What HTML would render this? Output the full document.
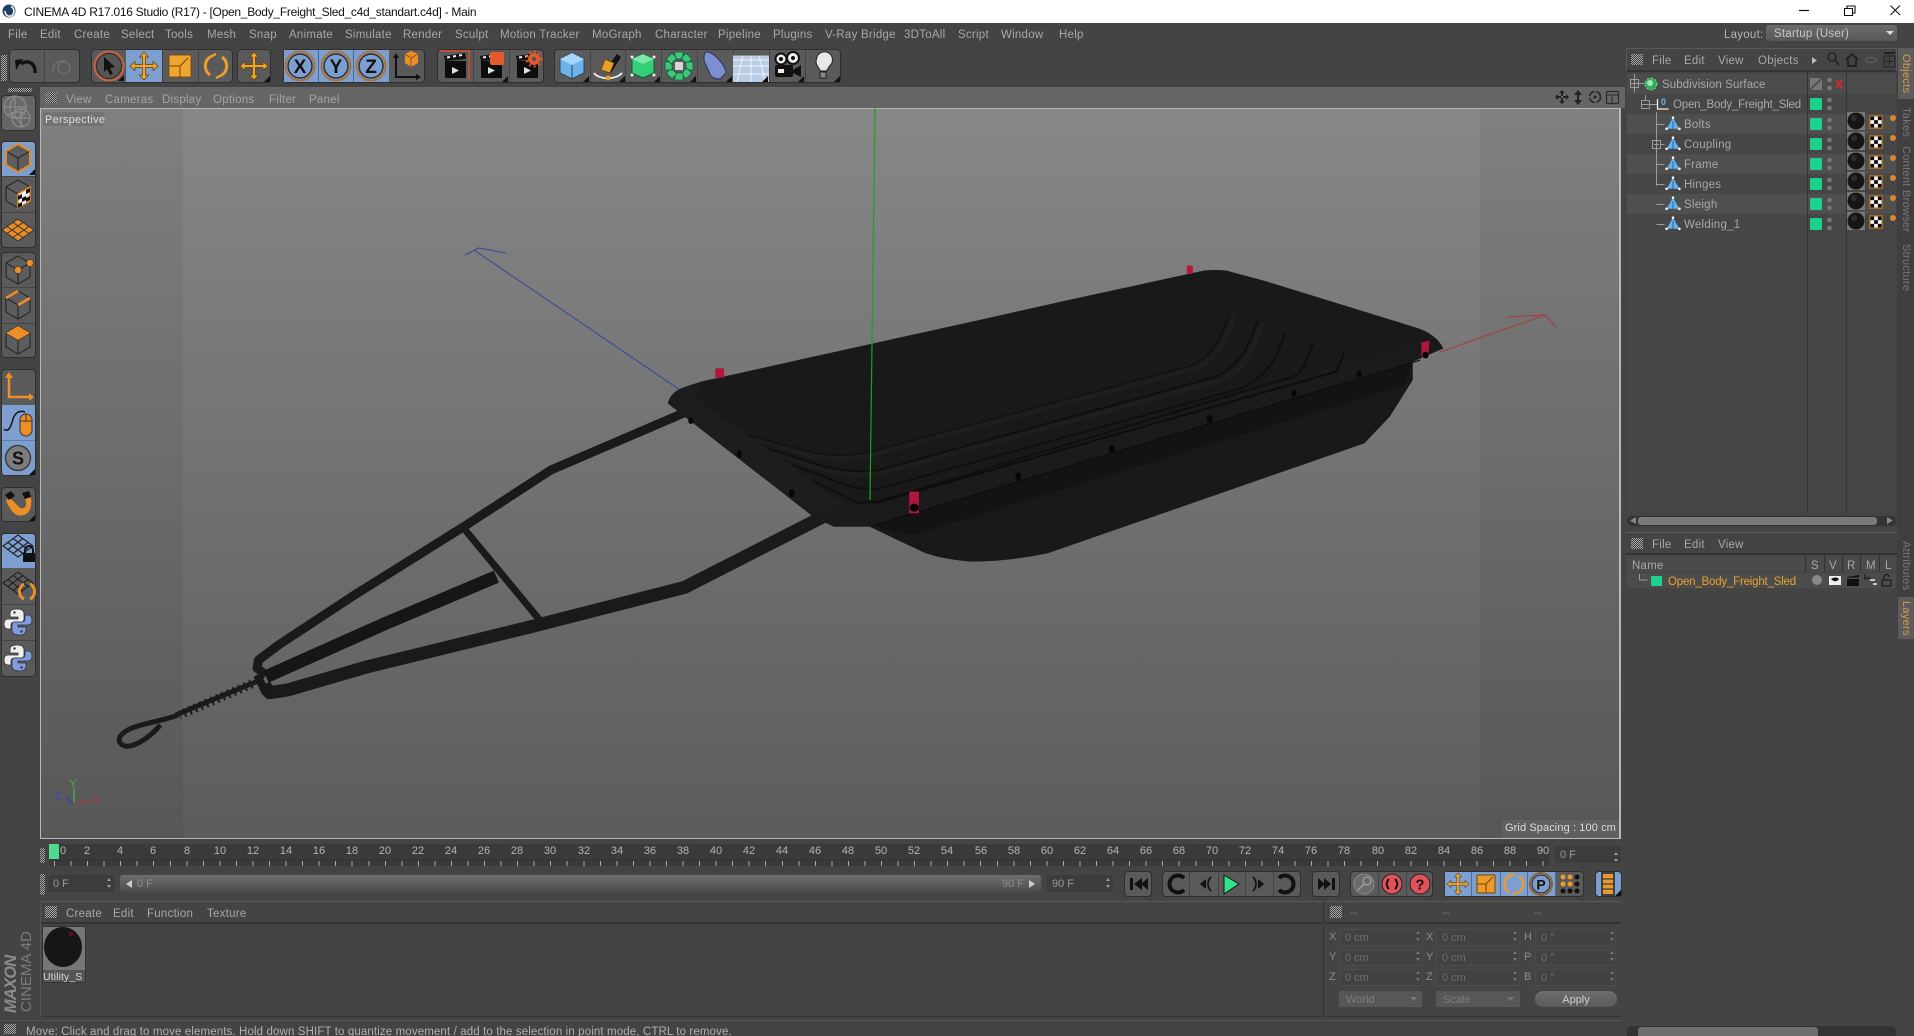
<!DOCTYPE html>
<html><head><meta charset="utf-8"><title>CINEMA 4D</title>
<style>
html,body{margin:0;padding:0;width:1914px;height:1036px;overflow:hidden;background:#444}
body{position:relative;z-index:0;font-family:"Liberation Sans",sans-serif;font-size:11.5px;color:#a8a8a8}
.a,.t{position:absolute}
.t{white-space:nowrap;line-height:14px;letter-spacing:.25px;margin-top:1px}
.n{letter-spacing:.1px}
.g{position:absolute;background:conic-gradient(#a8a8a8 25%,#3c3c3c 0 50%,#a8a8a8 0 75%,#3c3c3c 0) 0 0/2px 2px}
.b{position:absolute;background:#5a5a5a;border:1px solid #2f2f2f;border-radius:4px;box-sizing:border-box}
.bl{position:absolute;background:#7d9fd0}
.dv{position:absolute;width:1px;background:#444}
.f{position:absolute;background:#3c3c3c;border-radius:2px;box-sizing:border-box;color:#9a9a9a;padding-left:5px;line-height:19px;font-size:11px}
.c{position:absolute;background:#424242;border:1px solid #4b4b4b;border-radius:2px;box-sizing:border-box;color:#6e6e6e;padding-left:5px;height:17px;line-height:16px;font-size:11px}
.dim{color:#8c8c8c;font-size:11px;margin-top:0}
.rl{position:absolute;top:844px;width:24px;text-align:center;color:#b5b5b5;font-size:11px;line-height:14px}
.tab{position:absolute;left:1898px;width:16px;writing-mode:vertical-rl;font-size:11px;color:#777;box-sizing:border-box;text-align:center;line-height:17px;white-space:nowrap;letter-spacing:.3px}
</style></head><body>

<!-- title bar -->
<div class="a" style="left:0;top:0;width:1914px;height:23px;background:#fff"></div>
<div class="t" style="left:24px;top:5px;color:#111;font-size:12px;letter-spacing:-.28px;margin-top:0">CINEMA 4D R17.016 Studio (R17) - [Open_Body_Freight_Sled_c4d_standart.c4d] - Main</div>

<!-- main menu -->
<div class="t" style="left:8px;top:27px">File</div><div class="t" style="left:40px;top:27px">Edit</div><div class="t" style="left:74px;top:27px">Create</div><div class="t" style="left:121px;top:27px">Select</div><div class="t" style="left:165px;top:27px">Tools</div><div class="t" style="left:207px;top:27px">Mesh</div><div class="t" style="left:249px;top:27px">Snap</div><div class="t" style="left:289px;top:27px">Animate</div><div class="t" style="left:345px;top:27px">Simulate</div><div class="t" style="left:403px;top:27px">Render</div><div class="t" style="left:455px;top:27px">Sculpt</div><div class="t" style="left:500px;top:27px">Motion Tracker</div><div class="t" style="left:592px;top:27px">MoGraph</div><div class="t" style="left:655px;top:27px">Character</div><div class="t" style="left:718px;top:27px">Pipeline</div><div class="t" style="left:773px;top:27px">Plugins</div><div class="t" style="left:825px;top:27px">V-Ray Bridge</div><div class="t" style="left:904px;top:27px">3DToAll</div><div class="t" style="left:958px;top:27px">Script</div><div class="t" style="left:1001px;top:27px">Window</div><div class="t" style="left:1059px;top:27px">Help</div>
<div class="t" style="left:1724px;top:27px;color:#b5b5b5">Layout:</div>
<div class="a" style="left:1766px;top:25px;width:131px;height:16px;background:linear-gradient(#6c6c6c,#585858);border-radius:3px;color:#c8c8c8;line-height:18px;padding-left:8px;box-sizing:border-box;letter-spacing:.2px">Startup (User)</div>

<!-- top toolbar bases -->
<div class="g" style="left:1px;top:55px;width:6px;height:26px"></div>
<div class="b" style="left:9px;top:49px;width:71px;height:34px"></div>
<div class="b" style="left:91px;top:49px;width:142px;height:34px"></div>
<div class="bl" style="left:126px;top:50px;width:36px;height:32px"></div>
<div class="b" style="left:237px;top:49px;width:34px;height:34px"></div>
<div class="b" style="left:283px;top:49px;width:142px;height:34px"></div>
<div class="bl" style="left:284px;top:50px;width:105px;height:32px"></div>
<div class="b" style="left:437px;top:49px;width:107px;height:34px"></div>
<div class="b" style="left:554px;top:49px;width:287px;height:34px"></div>
<div class="dv" style="left:44px;top:50px;height:32px"></div><div class="dv" style="left:162px;top:50px;height:32px"></div><div class="dv" style="left:198px;top:50px;height:32px"></div><div class="dv" style="left:318px;top:50px;height:32px;background:#4a6a9a"></div><div class="dv" style="left:353px;top:50px;height:32px;background:#4a6a9a"></div><div class="dv" style="left:473px;top:50px;height:32px"></div><div class="dv" style="left:509px;top:50px;height:32px"></div><div class="dv" style="left:590px;top:50px;height:32px"></div><div class="dv" style="left:625px;top:50px;height:32px"></div><div class="dv" style="left:661px;top:50px;height:32px"></div><div class="dv" style="left:697px;top:50px;height:32px"></div><div class="dv" style="left:733px;top:50px;height:32px"></div><div class="dv" style="left:769px;top:50px;height:32px"></div><div class="dv" style="left:805px;top:50px;height:32px"></div>

<!-- left toolbar bases -->
<div class="g" style="left:8px;top:88px;width:24px;height:4px"></div>
<div class="b" style="left:1px;top:95px;width:35px;height:36px;background:#666"></div>
<div class="b" style="left:1px;top:141px;width:35px;height:107px"></div>
<div class="bl" style="left:2px;top:142px;width:33px;height:34px;border-radius:3px 3px 0 0"></div>
<div class="b" style="left:1px;top:252px;width:35px;height:106px"></div>
<div class="b" style="left:1px;top:369px;width:35px;height:107px"></div>
<div class="bl" style="left:2px;top:405px;width:33px;height:70px;border-radius:0 0 3px 3px"></div>
<div class="b" style="left:1px;top:487px;width:35px;height:35px"></div>
<div class="b" style="left:1px;top:533px;width:35px;height:144px"></div>
<div class="bl" style="left:2px;top:534px;width:33px;height:34px;border-radius:3px 3px 0 0"></div>
<div class="a" style="left:2px;top:212px;width:33px;height:1px;background:#444"></div><div class="a" style="left:2px;top:176px;width:33px;height:1px;background:#444"></div><div class="a" style="left:2px;top:287px;width:33px;height:1px;background:#444"></div><div class="a" style="left:2px;top:323px;width:33px;height:1px;background:#444"></div><div class="a" style="left:2px;top:440px;width:33px;height:1px;background:#5e7ca8"></div><div class="a" style="left:2px;top:604px;width:33px;height:1px;background:#444"></div><div class="a" style="left:2px;top:640px;width:33px;height:1px;background:#444"></div>

<!-- viewport header -->
<div class="a" style="left:40px;top:87px;width:1585px;height:21px;background:#666"></div>
<div class="g" style="left:45px;top:92px;width:12px;height:11px"></div>
<div class="t" style="left:66px;top:92px;color:#a4a4a4">View</div><div class="t" style="left:105px;top:92px;color:#a4a4a4">Cameras</div><div class="t" style="left:162px;top:92px;color:#a4a4a4">Display</div><div class="t" style="left:213px;top:92px;color:#a4a4a4">Options</div><div class="t" style="left:269px;top:92px;color:#a4a4a4">Filter</div><div class="t" style="left:309px;top:92px;color:#a4a4a4">Panel</div>

<!-- viewport -->
<div class="a" style="left:40px;top:108px;width:1581px;height:731px;box-sizing:border-box;border:1px solid #b8b8b8;border-right:2px solid #b8b8b8;background:linear-gradient(#878787,#5c5c5c)"></div>
<div class="a" style="left:41px;top:109px;width:142px;height:729px;background:rgba(0,0,0,.05)"></div>
<div class="a" style="left:1480px;top:109px;width:139px;height:729px;background:rgba(0,0,0,.05)"></div>
<div class="a" style="left:43px;top:112px;width:61px;height:14px;background:#737373;border-radius:2px"></div>
<div class="t" style="left:45px;top:112px;color:#dcdcdc;font-size:11px">Perspective</div>
<div class="a" style="left:1502px;top:820px;width:117px;height:18px;background:#606060"></div>
<div class="t" style="left:1505px;top:820px;color:#dcdcdc;font-size:11px;letter-spacing:.1px">Grid Spacing : 100 cm</div>

<!-- 3D model and all icons -->
<svg class="a" style="left:0;top:0;z-index:1" width="1914" height="1036" viewBox="0 0 1914 1036">
<defs>
<g id="corner"><polygon points="0,0 -6,0 0,-6" fill="#111"/></g>
<g id="arrows" fill="#f0a52c" stroke="#5a3a10" stroke-width=".7"><path d="M-1.5-9V-1.5H-9V-4.5L-14 0-9 4.5V1.5H-1.5V9H-4.5L0 14 4.5 9H1.5V1.5H9V4.5L14 0 9-4.5V-1.5H1.5V-9H4.5L0-14-4.5-9Z"/></g>
<g id="clap"><rect x="-10" y="-5" width="21" height="17" fill="#0d0d0d"/><path d="M-11-10 10-13 11-7-10-5Z" fill="#111"/><path d="M-8-8.5-5-9M-2-9.5 1-10M4-10.5 7-11" stroke="#eee" stroke-width="2"/><polygon points="-3,1 -3,8 4,4.5" fill="#ddd"/></g>
<g id="sph"><rect x="-9" y="-9" width="18" height="18" fill="#777"/><circle r="8.5" fill="#161616"/><circle cx="-2" cy="-3" r="3" fill="#2c2c2c"/></g>
<g id="chk"><rect x="-7" y="-7" width="14" height="14" fill="#a66a25"/><rect x="-5.5" y="-5.5" width="11" height="11" fill="#f2f2f2"/><path d="M-5.5-5.5h3.6v3.6h-3.6zM1.9-5.5h3.6v3.6h-3.6zM-1.9-1.9h3.8v3.8h-3.8zM-5.5 1.9h3.6v3.6h-3.6zM1.9 1.9h3.6v3.6h-3.6z" fill="#111"/></g>
<g id="tri"><polygon points="0,-8 8,6 -8,6" fill="#62b2ee"/><path d="M0-3.5 0 6" stroke="#24507c" stroke-width="1"/><circle cy="-8" r="1.6" fill="#fff"/><circle cx="-8" cy="6" r="1.6" fill="#fff"/><circle cx="8" cy="6" r="1.6" fill="#fff"/></g>
<g id="cubeico"><path d="M0-14 12-7V7L0 14-12 7V-7Z" fill="#5d5d5d" stroke="#2a2a2a" stroke-width="1.2"/><path d="M-12-7 0 0 12-7M0 0V14" fill="none" stroke="#2a2a2a" stroke-width="1.2"/></g>
<g id="py"><path d="M-1-13C-7-13-8-11-8-8V-5H0V-3H-10C-13-3-14-1-14 2S-13 7-10 7H-7V3C-7 1-6 0-3 0H3C5 0 6-1 6-3V-8C6-11 4-13-1-13Z" fill="#efefef" stroke="#333" stroke-width=".8"/><path d="M1 13C7 13 8 11 8 8V5H0V3H10C13 3 14 1 14-2S13-7 10-7H7V-3C7-1 6 0 3 0H-3C-5 0-6 1-6 3V8C-6 11-4 13 1 13Z" fill="#7f9ce0" stroke="#333" stroke-width=".8"/><circle cx="-3.5" cy="-9.5" r="1.2" fill="#333"/><circle cx="3.5" cy="9.5" r="1.2" fill="#333"/></g>
<g id="grid" fill="none" stroke="#222" stroke-width="1.2"><path d="M0-11 15 0 0 11-15 0Z"/><path d="M-5-7.5 10 3.5M-10-3.5 5 7.5M5-7.5-10 3.5M10-3.5-5 7.5"/></g>
</defs>

<!-- title bar icons -->
<circle cx="9" cy="11" r="6.5" fill="#20405e"/><path d="M5 11a4.5 5 0 1 0 6-4.5" fill="none" stroke="#dfe6ee" stroke-width="1.8"/>
<path d="M1799 10.5h10" stroke="#111" stroke-width="1.2"/>
<path d="M1844.5 8.5h8v7h-8zM1847 8.5v-2.5h8v7h-2.5" fill="none" stroke="#111" stroke-width="1.1"/>
<path d="M1890.500 5.500 1900 15M1900 5.500 1890.500 15" stroke="#111" stroke-width="1.1"/>
<!-- dropdown arrow -->
<polygon points="1886,31 1894,31 1890,35" fill="#ddd"/>

<!-- axes behind the hull -->
<path d="M474 250 680 390" stroke="#3c4a94" stroke-width="1.1"/><path d="M465 255 479 248 506 253" fill="none" stroke="#3c4a94" stroke-width="1.1"/>
<path d="M1440 352 1545 315" stroke="#a83b3b" stroke-width="1.1"/><path d="M1507 317 1545 315 1556 327" fill="none" stroke="#a83b3b" stroke-width="1.1"/>

<!-- frame, zoom-9 coordinates -->
<g transform="translate(100 400) scale(.4464 .3333)" fill="none" stroke-linejoin="round" stroke-linecap="butt">
<g stroke="#1a1a1a">
<path vector-effect="non-scaling-stroke" stroke-width="9" d="M1320 32 1010 210 815 380 570 585 400 735 355 780 352 805 372 825"/>
<path vector-effect="non-scaling-stroke" stroke-width="7" d="M815 385 985 660"/>
<path vector-effect="non-scaling-stroke" stroke-width="13" d="M1620 350 1310 562 960 682 600 800 420 870 380 878 368 855"/>
<path vector-effect="non-scaling-stroke" stroke-width="13" stroke="#161616" d="M888 530 640 670 372 830"/>
<path vector-effect="non-scaling-stroke" stroke-width="8" stroke="#181818" d="M352 825 372 880"/>
<path vector-effect="non-scaling-stroke" stroke-width="5" d="M350 845 170 945"/>
<path vector-effect="non-scaling-stroke" stroke-width="9" stroke-dasharray="2 4" d="M340 852 178 945"/>
<path vector-effect="non-scaling-stroke" stroke-width="5" d="M175 945C150 960 95 970 70 985 45 1000 35 1020 50 1035 70 1050 110 1015 135 975"/>
</g>
</g>

<!-- hull, zoom-10 coordinates -->
<g transform="translate(650 240) scale(.5102 .3333)">
<path d="M430 860 1495 365 1495 420 1450 530 1400 610 780 940 Q700 965 630 965 Q580 960 540 940Z" fill="#191919"/>
<path d="M430 858 1495 368 1480 435 515 885Z" fill="#131313"/>
<path d="M35 490 Q40 455 70 440 L100 425 320 350 660 235 820 180 1085 92 Q1110 88 1130 92 L1210 125 1500 262 Q1540 280 1555 325 L1495 365 430 860 360 860 320 830Z" fill="#191919"/>
<path d="M60 470 85 500 380 795 430 790 1520 300 1555 325 1495 365 430 860 360 860 320 830 35 490Z" fill="#1b1b1b"/>
<path d="M35 490 Q40 455 70 440 L100 430 85 470 380 790 320 830Z" fill="#1d1d1d"/>
<g fill="none">
<path vector-effect="non-scaling-stroke" stroke="#1e1e1e" stroke-width="5" d="M1145 225C1130 310 1110 360 1060 388L440 642C400 660 340 660 300 640L190 590"/>
<path vector-effect="non-scaling-stroke" stroke="#111" stroke-width="1.5" d="M1135 220C1120 300 1100 350 1060 378L440 632C400 650 340 650 300 630L190 585"/>
<path vector-effect="non-scaling-stroke" stroke="#1e1e1e" stroke-width="5" d="M1200 250C1180 330 1170 380 1120 420L450 700C410 710 360 700 320 680L235 630"/>
<path vector-effect="non-scaling-stroke" stroke="#0f0f0f" stroke-width="2" d="M1190 245C1170 330 1160 370 1110 410L450 690C410 700 360 690 320 670L230 625"/>
<path vector-effect="non-scaling-stroke" stroke="#0f0f0f" stroke-width="2" d="M1245 280C1225 360 1215 400 1160 445L450 745C420 755 380 735 350 715L280 675"/>
<path vector-effect="non-scaling-stroke" stroke="#0f0f0f" stroke-width="2" d="M1300 310C1285 370 1280 395 1260 410L445 785 410 790 320 725"/>
<path vector-effect="non-scaling-stroke" stroke="#0d0d0d" stroke-width="2" d="M1360 340 1345 395 440 790"/>
<path vector-effect="non-scaling-stroke" stroke="#0c0c0c" stroke-width="1" d="M440 855 1510 360"/>
</g>
<g fill="#b3163c"><rect x="128" y="385" width="17" height="28"/><rect x="508" y="755" width="19" height="65"/><path d="M1512 308 1528 302 1525 355 1512 350Z"/><rect x="1052" y="76" width="12" height="26" rx="5"/></g>
<g fill="#070707"><ellipse cx="80" cy="542" rx="5" ry="10"/><ellipse cx="175" cy="643" rx="5" ry="11"/><ellipse cx="278" cy="760" rx="6" ry="12"/><ellipse cx="722" cy="710" rx="6" ry="12"/><ellipse cx="905" cy="627" rx="6" ry="12"/><ellipse cx="1097" cy="537" rx="6" ry="12"/><ellipse cx="1262" cy="460" rx="5" ry="11"/><ellipse cx="1390" cy="402" rx="5" ry="10"/><ellipse cx="518" cy="803" rx="9" ry="12"/><ellipse cx="1520" cy="345" rx="6" ry="10"/></g>
</g>
<path d="M875 108 870 500" stroke="#20a020" stroke-width="1.2"/>

<!-- gizmo -->
<path d="M74 804V788" stroke="#42b442" stroke-width="1.3"/><path d="M74 804 90 800" stroke="#a53a3a" stroke-width="1.3"/><path d="M74 804 66 798" stroke="#3c3cb0" stroke-width="1.3"/>
<text x="73" y="787" fill="#42b442" font-size="11" font-family="Liberation Sans" text-anchor="middle">Y</text>
<text x="96" y="804" fill="#b04040" font-size="11" font-family="Liberation Sans" text-anchor="middle">X</text>
<text x="58" y="800" fill="#4040c0" font-size="11" font-family="Liberation Sans" text-anchor="middle">Z</text>

<!-- viewport nav icons -->
<g fill="#222"><path d="M1562 90l3 3h-2v3h-2v-3h-2zM1562 104l3-3h-2v-3h-2v3h-2zM1555 97l3-3v2h3v2h-3v2zM1569 97l-3-3v2h-3v2h3v2z"/><path d="M1578 90l4 5h-3v5h3l-4 5-4-5h3v-5h-3z"/></g>
<circle cx="1595" cy="97" r="5.500" fill="none" stroke="#222" stroke-width="1.6" stroke-dasharray="7 2"/><circle cx="1595" cy="97" r="1.500" fill="#222"/>
<rect x="1606.500" y="91.500" width="12" height="12" rx="1" fill="none" stroke="#2a2a2a" stroke-width="1.2"/><path d="M1606.500 95h12M1612 95v8.500" stroke="#2a2a2a" fill="none"/>

<!-- top toolbar icons -->
<g transform="translate(26 66)"><path d="M9 7C10-3 1-7-5-2" fill="none" stroke="#111" stroke-width="3.4"/><polygon points="-11,-6 -3,-7 -10,4" fill="#111"/></g>
<g transform="translate(62 66)" fill="none" stroke="#6f6f6f" stroke-width="1.5"><path d="M-9 6C-10-4 0-8 6-3"/><circle cx="2" cy="2" r="6"/></g>
<g transform="translate(109 66)"><circle r="14.500" fill="#555" stroke="#c6633c" stroke-width="2"/><circle r="12.500" fill="none" stroke="#2e2e2e"/><path d="M-5-9 6 1 1 2 4 8 1 9-2 3-5 6Z" fill="#111"/><use href="#corner" x="15" y="15"/></g>
<use href="#arrows" x="144" y="66"/>
<g transform="translate(180 66)"><rect x="-11" y="-11" width="22" height="22" fill="#f0a52c" stroke="#6b4510" stroke-width=".8"/><path d="M-11 0H0V11M0 0 8-8" stroke="#6b4510" stroke-width="1" fill="none"/></g>
<g transform="translate(216 66)" fill="none" stroke="#e8a02a" stroke-width="3"><path d="M-6-9A11 11 0 0 0-6 9"/><path d="M6 9A11 11 0 0 0 6-9"/><path d="M-6-9 0-12M6 9 0 12" stroke-width="2.500"/></g>
<use href="#arrows" x="254" y="66"/><use href="#corner" x="270" y="82"/>
<g font-family="Liberation Sans" font-weight="bold" font-size="19" text-anchor="middle" fill="#111">
<g transform="translate(300 66)"><circle r="14.500" fill="#7d9fd0" stroke="#a8743a" stroke-width="2"/><circle r="12" fill="none" stroke="#2e2e2e" stroke-width="1.5"/><text y="7">X</text></g>
<g transform="translate(336 66)"><circle r="14.500" fill="#7d9fd0" stroke="#a8743a" stroke-width="2"/><circle r="12" fill="none" stroke="#2e2e2e" stroke-width="1.5"/><text y="7">Y</text></g>
<g transform="translate(371 66)"><circle r="14.500" fill="#7d9fd0" stroke="#a8743a" stroke-width="2"/><circle r="12" fill="none" stroke="#2e2e2e" stroke-width="1.5"/><text y="7">Z</text></g>
</g>
<g transform="translate(407 66)"><path d="M-11-10V11H12" fill="none" stroke="#111" stroke-width="2"/><polygon points="-14,-8 -11,-13 -8,-8" fill="#111"/><polygon points="9,8 14,11 9,14" fill="#111"/><path d="M-2-12 4-15 11-12V-3L4 1-2-3Z" fill="#ee8f26"/><path d="M4-8V1M-2-12 4-8 11-12" stroke="#8a5014" fill="none"/></g>
<g transform="translate(455 66)"><use href="#clap"/><path d="M-15-15H14V15" fill="none" stroke="#b5533a" stroke-width="2"/></g>
<g transform="translate(491 66)"><use href="#clap"/><rect x="-1" y="-14" width="14" height="13" rx="2" fill="#e4592d"/><use href="#corner" x="17" y="16"/></g>
<g transform="translate(527 66)"><use href="#clap"/><circle cx="7" cy="-7" r="6" fill="#e4592d"/><circle cx="7" cy="-7" r="2.200" fill="#555"/><circle cx="7" cy="-7" r="7.500" fill="none" stroke="#e4592d" stroke-width="2" stroke-dasharray="2 3"/></g>
<g transform="translate(572 66)"><path d="M0-13 12-7V7L0 13-12 7V-7Z" fill="#6db3ea" stroke="#24415f"/><path d="M-12-7 0-1 12-7 0-13Z" fill="#a7d5f7"/><path d="M0-1V13" stroke="#24415f"/><use href="#corner" x="17" y="16"/></g>
<g transform="translate(608 66)"><path d="M-3 4 9-12 13-9 3 7Z" fill="#111"/><path d="M-7 4-3-7 6-3 2 7Z" fill="#e8a02a" stroke="#6b4510"/><path d="M-14 7C-9 14 8 14 14 7" fill="none" stroke="#eee" stroke-width="1.800"/><circle cy="12" r="2.500" fill="#e8a02a"/><use href="#corner" x="17" y="16"/></g>
<g transform="translate(643 66)"><path d="M0-12 11-7V7L0 12-11 7V-7Z" fill="#35cf7a" stroke="#0b5e33"/><path d="M-11-7 0-2 11-7 0-12Z" fill="#7ce6a8"/><g fill="#eee"><circle cx="-11" cy="-9" r="1.500"/><circle cx="11" cy="-9" r="1.500"/><circle cx="-11" cy="9" r="1.500"/><circle cx="11" cy="9" r="1.500"/></g><use href="#corner" x="17" y="16"/></g>
<g transform="translate(679 66)"><g fill="#3ec77c" stroke="#0f5a33" stroke-width=".7"><rect x="-4" y="-14" width="8" height="7" transform="rotate(0)"/><rect x="-4" y="-14" width="8" height="7" transform="rotate(45)"/><rect x="-4" y="-14" width="8" height="7" transform="rotate(90)"/><rect x="-4" y="-14" width="8" height="7" transform="rotate(135)"/><rect x="-4" y="-14" width="8" height="7" transform="rotate(180)"/><rect x="-4" y="-14" width="8" height="7" transform="rotate(225)"/><rect x="-4" y="-14" width="8" height="7" transform="rotate(270)"/><rect x="-4" y="-14" width="8" height="7" transform="rotate(315)"/></g><rect x="-4" y="-4" width="8" height="8" fill="#d5d5d5"/><use href="#corner" x="17" y="16"/></g>
<g transform="translate(715 66)"><path d="M-8-14C-2-14 10-2 11 7L5 13C1 13-2 12-4 10L-10-3C-12-8-11-14-8-14Z" fill="#7d8fcf" stroke="#2d3560"/><use href="#corner" x="17" y="16"/></g>
<g transform="translate(751 66)"><rect x="-18" y="-11" width="36" height="27" fill="#b9cde6"/><path d="M-18-6H18M-18 0H18M-18 8H18M-8-11-14 16M8-11 14 16M0-11V16" stroke="#eef4fb" fill="none"/><path d="M-18-11H18" stroke="#555"/><use href="#corner" x="17" y="16"/></g>
<g transform="translate(787 66)"><circle cx="-6" cy="-7" r="5.500" fill="#eee" stroke="#111" stroke-width="2"/><circle cx="6" cy="-8" r="6" fill="#eee" stroke="#111" stroke-width="2"/><circle cx="-6" cy="-7" r="2" fill="#111"/><circle cx="6" cy="-8" r="2" fill="#111"/><rect x="-12" y="-1" width="18" height="12" rx="2" fill="#111"/><rect x="-9" y="3" width="6" height="4" fill="#eee"/><polygon points="6,4 14,-1 14,11 6,7" fill="#111"/><use href="#corner" x="17" y="16"/></g>
<g transform="translate(823 66)"><path d="M-7-6A8 8 0 1 1 6 1L3 6H-3L-6 1A8 8 0 0 1-7-6Z" fill="#e8e8e8" stroke="#222" transform="translate(0.500 -1)"/><rect x="-3" y="6" width="6" height="6" fill="#888" stroke="#222"/><use href="#corner" x="17" y="16"/></g>

<!-- left toolbar icons -->
<g transform="translate(18 112)" fill="none" stroke="#8c8c8c" stroke-width="1.200"><circle cx="-3" cy="-5" r="11" fill="#6a6a6a"/><circle cx="3" cy="6" r="9"/><path d="M-3-16V6M-14-5H8M-11 3C-4-1 4-1 8 3M-3-16C-10-8-10 2-3 6M-6 6H12M3-3V15M-3 4 5 14"/></g>
<g transform="translate(18 158)"><use href="#cubeico"/><path d="M0-14 12-7V7L0 14-12 7V-7Z" fill="none" stroke="#e88a26" stroke-width="2"/><use href="#corner" x="17" y="17"/></g>
<g transform="translate(18 194)"><use href="#cubeico"/><path d="M0 0 12-7V7L0 14Z" fill="#f2f2f2" stroke="#e88a26" stroke-width="1.500"/><path d="M0 2 4 0V4L0 6ZM8-4 12-6V-2L8 0ZM4 4 8 2V6L4 8ZM0 10 4 8V12L0 14ZM8 4 12 2V6L8 8Z" fill="#111"/></g>
<g transform="translate(18 230)"><path d="M0-11 16 0 0 11-16 0Z" fill="#e88a26" stroke="#333"/><path d="M-5-7.500 11 3.500M-11-3.500 5 7.500M5-7.500-11 3.500M11-3.500-5 7.500" stroke="#333" fill="none"/></g>
<g transform="translate(18 270)"><use href="#cubeico"/><circle cy="0" r="3.500" fill="#ee8f26" stroke="#333" stroke-width=".6"/><circle cx="12" cy="-7" r="3.500" fill="#ee8f26" stroke="#333" stroke-width=".6"/></g>
<g transform="translate(18 305)"><use href="#cubeico"/><path d="M-12-7 0-14M0 0 12-7" stroke="#ee8f26" stroke-width="2.500"/></g>
<g transform="translate(18 340)"><use href="#cubeico"/><path d="M0-14 12-7 0 0-12-7Z" fill="#ee8f26"/></g>
<g transform="translate(18 387)"><path d="M-9-10V10H13" fill="none" stroke="#ee8f26" stroke-width="2.500"/><polygon points="-13,-9 -9,-15 -5,-9" fill="#ee8f26"/><polygon points="11,6 16,10 11,14" fill="#ee8f26"/></g>
<g transform="translate(18 423)"><path d="M-14 6C-10 10-7 4-5-4-3-10 1-13 7-11" fill="none" stroke="#111" stroke-width="1.500"/><rect x="2" y="-9" width="12" height="22" rx="6" fill="#ee8f26" stroke="#333"/><path d="M2-2H14M8-9V-2" stroke="#333"/></g>
<g transform="translate(18 458)"><circle r="12.500" fill="#7c7c7c" stroke="#3d3d3d" stroke-width="1.500"/><text y="6.500" text-anchor="middle" font-family="Liberation Sans" font-weight="bold" font-size="18" fill="#111">S</text><use href="#corner" x="17" y="17"/></g>
<g transform="translate(18 504)"><path d="M-9-7 1 3C4 6 9 4 8-2L7-6 12-9C15-2 13 9 6 11-2 13-6 9-12-3Z" fill="#ee8f26"/><path d="M-13-9-7-13-3-8-9-4ZM4-11 11-13 13-7 7-5Z" fill="#111"/><use href="#corner" x="17" y="17"/></g>
<g transform="translate(18 549)"><use href="#grid" y="-3"/><rect x="5" y="4" width="12" height="9" fill="#111"/><path d="M7 4V1A4 4 0 0 1 15 1V4" fill="none" stroke="#111" stroke-width="2"/></g>
<g transform="translate(18 586)"><use href="#grid" y="-3"/><path d="M6-1A7 8 0 0 0 6 14M12-1A7 8 0 0 1 12 14" fill="none" stroke="#ee8f26" stroke-width="3" transform="translate(0 -1)"/></g>
<use href="#py" x="18" y="622"/><use href="#py" x="18" y="658"/>

<!-- transport icons -->
<polygon points="132,880 126,884 132,888" fill="#ccc"/><polygon points="1029,880 1035,884 1029,888" fill="#ccc"/>
<g fill="#111">
<path d="M1130 878h3v12h-3zM1142 878v12l-8-6zM1148 878v12l-7-6z"/>
<g transform="translate(1176 884)"><path d="M8-6A8.500 8.500 0 1 0 8 6" fill="none" stroke="#111" stroke-width="4"/></g>
<path d="M1206 879v10l-6-5z"/><path d="M1211 877C1207 881 1207 887 1211 891" fill="none" stroke="#111" stroke-width="1.600"/>
<path d="M1253 877C1257 881 1257 887 1253 891" fill="none" stroke="#111" stroke-width="1.600"/><path d="M1258 879v10l6-5z"/>
<g transform="translate(1287 884)"><path d="M-8-6A8.500 8.500 0 1 1-8 6" fill="none" stroke="#111" stroke-width="4"/></g>
<path d="M1318 878v12l7-6zM1324 878v12l7-6zM1332 878h3v12h-3z"/>
</g>
<polygon points="1224,875 1239,884 1224,894" fill="#32e38a" stroke="#111"/>
<g transform="translate(1364 884)"><circle r="10" fill="#6a6a6a" stroke="#8a8a8a"/><circle cx="3" cy="-3" r="4" fill="none" stroke="#999" stroke-width="1.600"/><path d="M-6 6 1-1" stroke="#999" stroke-width="1.800"/></g>
<g transform="translate(1392 884)"><circle r="10" fill="#e0525a" stroke="#222"/><path d="M-3-5C-6-2-6 2-3 5M3-5C6-2 6 2 3 5" fill="none" stroke="#111" stroke-width="2"/></g>
<g transform="translate(1420 884)"><circle r="10" fill="#e0525a" stroke="#222"/><text y="5.500" text-anchor="middle" font-family="Liberation Sans" font-weight="bold" font-size="15" fill="#111">?</text></g>
<g transform="translate(1458 884) scale(.78)"><use href="#arrows"/></g>
<g transform="translate(1486 884)"><rect x="-9" y="-9" width="18" height="18" fill="#ee9b2c" stroke="#6b4510"/><path d="M-9 0H0V9M0 0 7-7" stroke="#6b4510" fill="none"/></g>
<g transform="translate(1514 884)" fill="none" stroke="#ee9b2c" stroke-width="2.500"><path d="M-5-8A9.500 9.500 0 0 0-5 8"/><path d="M5 8A9.500 9.500 0 0 0 5-8"/><path d="M-5-8 1-10M5 8-1 10"/></g>
<g transform="translate(1541 884)"><circle r="11" fill="#7d9fd0" stroke="#8b6234" stroke-width="2"/><circle r="9" fill="none" stroke="#222"/><text y="5.500" text-anchor="middle" font-family="Liberation Sans" font-weight="bold" font-size="14" fill="#111">P</text></g>
<g><g fill="#ee9b2c"><circle cx="1563" cy="877" r="2.500"/><circle cx="1570" cy="877" r="2.500"/><circle cx="1563" cy="884" r="2.500"/><circle cx="1570" cy="884" r="2.500"/></g><g fill="#111"><circle cx="1577" cy="877" r="2.500"/><circle cx="1577" cy="884" r="2.500"/><circle cx="1563" cy="891" r="2.500"/><circle cx="1570" cy="891" r="2.500"/><circle cx="1577" cy="891" r="2.500"/></g></g>
<g transform="translate(1608 884)"><rect x="-6" y="-11" width="12" height="22" fill="#e89a32" stroke="#222" stroke-width="1.500"/><path d="M-6-5H6M-6 0H6M-6 5H6" stroke="#222"/><use href="#corner" x="13" y="12"/></g>

<!-- object manager icons -->
<g fill="none" stroke="#9c9c9c" stroke-width="1">
<path d="M1630.500 79.500h8v8h-8zM1634.500 74v18M1630.500 83.500h16"/>
<path d="M1641.500 100.500h8v8h-8zM1645.500 95v5M1641.500 104.500h16"/>
<path d="M1656.500 112v74M1656.500 124.500h8M1656.500 164.500h8M1656.500 184.500h8M1656.500 204.500h8M1656.500 224.500h8"/>
<path d="M1652.500 140.500h8v8h-8zM1656.500 142v5M1654 144.500h5M1660.500 144.500h4"/>
</g>
<circle cx="1651" cy="84" r="6" fill="#2fae5a" stroke="#b9d8c1" stroke-width=".7" stroke-dasharray="2 2"/><circle cx="1650" cy="83" r="3" fill="#9fe8b8"/>
<path d="M1657.500 99v10h11" fill="none" stroke="#eee" stroke-width="1.300"/><text x="1661" y="105" font-family="Liberation Sans" font-weight="bold" font-size="9" fill="#6db3ea">0</text>
<use href="#tri" transform="translate(1673 124) scale(.8)"/><use href="#tri" transform="translate(1673 144) scale(.8)"/><use href="#tri" transform="translate(1673 164) scale(.8)"/><use href="#tri" transform="translate(1673 184) scale(.8)"/><use href="#tri" transform="translate(1673 204) scale(.8)"/><use href="#tri" transform="translate(1673 224) scale(.8)"/>
<rect x="1810" y="78" width="12" height="12" fill="#777"/><path d="M1810 90 1822 78" stroke="#444" stroke-width="1.500"/>
<g fill="#1ed28e"><rect x="1810" y="98" width="12" height="12" rx="1.500"/><rect x="1810" y="118" width="12" height="12" rx="1.500"/><rect x="1810" y="138" width="12" height="12" rx="1.500"/><rect x="1810" y="158" width="12" height="12" rx="1.500"/><rect x="1810" y="178" width="12" height="12" rx="1.500"/><rect x="1810" y="198" width="12" height="12" rx="1.500"/><rect x="1810" y="218" width="12" height="12" rx="1.500"/></g>
<g fill="#777"><circle cx="1829.500" cy="80" r="2.300"/><circle cx="1829.500" cy="88" r="2.300"/><circle cx="1829.500" cy="100" r="2.300"/><circle cx="1829.500" cy="108" r="2.300"/><circle cx="1829.500" cy="120" r="2.300"/><circle cx="1829.500" cy="128" r="2.300"/><circle cx="1829.500" cy="140" r="2.300"/><circle cx="1829.500" cy="148" r="2.300"/><circle cx="1829.500" cy="160" r="2.300"/><circle cx="1829.500" cy="168" r="2.300"/><circle cx="1829.500" cy="180" r="2.300"/><circle cx="1829.500" cy="188" r="2.300"/><circle cx="1829.500" cy="200" r="2.300"/><circle cx="1829.500" cy="208" r="2.300"/><circle cx="1829.500" cy="220" r="2.300"/><circle cx="1829.500" cy="228" r="2.300"/></g>
<path d="M1836 80 1842 88M1842 80 1836 88" stroke="#d02a2a" stroke-width="2"/>
<g><use href="#sph" x="1856" y="121"/><use href="#chk" x="1876" y="122"/><circle cx="1893" cy="118" r="3" fill="#d98a2c"/>
<use href="#sph" x="1856" y="141"/><use href="#chk" x="1876" y="142"/><circle cx="1893" cy="138" r="3" fill="#d98a2c"/>
<use href="#sph" x="1856" y="161"/><use href="#chk" x="1876" y="162"/><circle cx="1893" cy="158" r="3" fill="#d98a2c"/>
<use href="#sph" x="1856" y="181"/><use href="#chk" x="1876" y="182"/><circle cx="1893" cy="178" r="3" fill="#d98a2c"/>
<use href="#sph" x="1856" y="201"/><use href="#chk" x="1876" y="202"/><circle cx="1893" cy="198" r="3" fill="#d98a2c"/>
<use href="#sph" x="1856" y="221"/><use href="#chk" x="1876" y="222"/><circle cx="1893" cy="218" r="3" fill="#d98a2c"/></g>
<g fill="none" stroke="#222" stroke-width="1.500"><polygon points="1812,57 1817,60.500 1812,64" fill="#bbb" stroke="none"/><circle cx="1832" cy="57" r="4"/><path d="M1835 60 1839 65"/><path d="M1846 60 1852 54 1858 60M1848 60V66H1856V60" stroke-width="2"/><ellipse cx="1871" cy="60" rx="5.500" ry="2.500" stroke="#666" stroke-width="1"/><rect x="1884" y="56" width="11" height="11" stroke-width="1"/><path d="M1884 53H1895" stroke-width="2"/><path d="M1889.500 58V65M1886 61.500H1893" stroke-width="1"/></g>

<!-- scroll arrows -->
<polygon points="1636,517 1630,520.500 1636,524" fill="#888"/><polygon points="1887,517 1893,520.500 1887,524" fill="#888"/>

<!-- layer row icons -->
<path d="M1639.500 574v6h8" fill="none" stroke="#9c9c9c"/>
<rect x="1651" y="576" width="11" height="10" rx="1" fill="#1ed28e"/>
<circle cx="1817" cy="580" r="5" fill="#888"/>
<rect x="1829" y="576" width="12" height="9" fill="#eee"/><path d="M1831 579C1834 577 1837 577 1839 579 1837 582 1834 582 1831 579Z" fill="#111"/>
<rect x="1847" y="579" width="12" height="7" fill="#111"/><path d="M1847 577 1859 575v2.500H1847Z" fill="#111"/>
<path d="M1865 574v6M1865 578h6" stroke="#111" fill="none"/><path d="M1870 580h5M1873 584h4" stroke="#eee" stroke-width="1.500"/>
<rect x="1882" y="580" width="9" height="6" fill="none" stroke="#111"/><path d="M1884 580V577A2.500 2.500 0 0 1 1889 577" fill="none" stroke="#111"/>

<!-- small arrows in fields -->
<g fill="#999"><path d="M107 881l2-3 2 3zM107 885l2 3 2-3z"/><path d="M1106 881l2-3 2 3zM1106 885l2 3 2-3z"/><path d="M1614 855l2-3 2 3zM1614 859l2 3 2-3z"/></g>
<g fill="#777"><path d="M1416 934l2-3 2 3zM1416 938l2 3 2-3zM1416 954l2-3 2 3zM1416 958l2 3 2-3zM1416 974l2-3 2 3zM1416 978l2 3 2-3zM1513 934l2-3 2 3zM1513 938l2 3 2-3zM1513 954l2-3 2 3zM1513 958l2 3 2-3zM1513 974l2-3 2 3zM1513 978l2 3 2-3zM1610 934l2-3 2 3zM1610 938l2 3 2-3zM1610 954l2-3 2 3zM1610 958l2 3 2-3zM1610 974l2-3 2 3zM1610 978l2 3 2-3z"/><path d="M1410 997h7l-3.500 4zM1507 997h7l-3.500 4z"/></g>
</svg>

<!-- objects panel -->
<div class="a" style="left:1626px;top:48px;width:271px;height:24px;border:1px solid #5a5a5a;border-bottom:2px solid #333;box-sizing:border-box"></div>
<div class="g" style="left:1631px;top:54px;width:12px;height:11px"></div>
<div class="t" style="left:1652px;top:53px">File</div><div class="t" style="left:1684px;top:53px">Edit</div><div class="t" style="left:1718px;top:53px">View</div><div class="t" style="left:1758px;top:53px">Objects</div>
<div class="a" style="left:1627px;top:73px;width:269px;height:440px;background:#464646"></div>
<div class="a" style="left:1627px;top:74px;width:269px;height:20px;background:#4c4c4c"></div><div class="a" style="left:1627px;top:94px;width:269px;height:20px;background:#464646"></div><div class="a" style="left:1627px;top:114px;width:269px;height:20px;background:#4f4f4f"></div><div class="a" style="left:1627px;top:154px;width:269px;height:20px;background:#4f4f4f"></div><div class="a" style="left:1627px;top:194px;width:269px;height:20px;background:#4f4f4f"></div>
<div class="a" style="left:1807px;top:73px;width:1px;height:440px;background:#333"></div><div class="a" style="left:1846px;top:73px;width:1px;height:440px;background:#333"></div>
<div class="t n" style="left:1662px;top:77px">Subdivision Surface</div><div class="t" style="left:1673px;top:97px;letter-spacing:-.2px">Open_Body_Freight_Sled</div><div class="t" style="left:1684px;top:117px">Bolts</div><div class="t" style="left:1684px;top:137px">Coupling</div><div class="t" style="left:1684px;top:157px">Frame</div><div class="t" style="left:1684px;top:177px">Hinges</div><div class="t" style="left:1684px;top:197px">Sleigh</div><div class="t" style="left:1684px;top:217px">Welding_1</div>

<!-- scrollbar -->
<div class="a" style="left:1627px;top:516px;width:269px;height:10px;background:#333;border-radius:5px"></div>
<div class="a" style="left:1638px;top:517px;width:239px;height:8px;background:#7a7a7a;border-radius:3px"></div>

<!-- layers panel -->
<div class="g" style="left:1631px;top:538px;width:12px;height:11px"></div>
<div class="a" style="left:1626px;top:532px;width:271px;height:1px;background:#5a5a5a"></div>
<div class="a" style="left:1626px;top:553px;width:271px;height:2px;background:#333"></div>
<div class="t" style="left:1652px;top:537px">File</div><div class="t" style="left:1684px;top:537px">Edit</div><div class="t" style="left:1718px;top:537px">View</div>
<div class="a" style="left:1627px;top:555px;width:269px;height:17px;background:#4a4a4a"></div>
<div class="t" style="left:1632px;top:558px">Name</div><div class="t" style="left:1811px;top:558px">S</div><div class="t" style="left:1829px;top:558px">V</div><div class="t" style="left:1847px;top:558px">R</div><div class="t" style="left:1866px;top:558px">M</div><div class="t" style="left:1885px;top:558px">L</div>
<div class="dv" style="left:1805px;top:555px;height:17px;background:#333"></div><div class="dv" style="left:1824px;top:555px;height:17px;background:#333"></div><div class="dv" style="left:1842px;top:555px;height:17px;background:#333"></div><div class="dv" style="left:1860px;top:555px;height:17px;background:#333"></div><div class="dv" style="left:1879px;top:555px;height:17px;background:#333"></div>
<div class="a" style="left:1627px;top:573px;width:269px;height:15px;background:#4c4c4c"></div>
<div class="t" style="left:1668px;top:574px;color:#e6a32e;letter-spacing:-.2px">Open_Body_Freight_Sled</div>

<!-- side tabs -->
<div class="a" style="left:1897px;top:48px;width:17px;height:590px;background:#3f3f3f"></div>
<div class="tab" style="top:48px;height:51px;background:#5c5c5c;color:#d59a45">Objects</div>
<div class="tab" style="top:104px;height:36px">Takes</div>
<div class="tab" style="top:145px;height:88px">Content Browser</div>
<div class="tab" style="top:242px;height:52px">Structure</div>
<div class="tab" style="top:536px;height:60px">Attributes</div>
<div class="tab" style="top:597px;height:42px;background:#5c5c5c;color:#d59a45">Layers</div>

<!-- timeline ruler -->
<div class="g" style="left:40px;top:848px;width:5px;height:15px"></div>
<div class="a" style="left:49px;top:844px;width:1500px;height:22px;background:#3a3a3a"></div>
<div class="a" style="left:54px;top:860px;width:1490px;height:1px;background:#333"></div>
<div class="a" style="left:54px;top:861px;width:1490px;height:5px;background:repeating-linear-gradient(90deg,#a8a8a8 0 1px,transparent 1px 16.54px)"></div>
<div class="a" style="left:49px;top:844px;width:10px;height:15px;background:#4fd98c"></div>
<div class="rl" style="left:51px">0</div><div class="rl" style="left:75px">2</div><div class="rl" style="left:108px">4</div><div class="rl" style="left:141px">6</div><div class="rl" style="left:175px">8</div><div class="rl" style="left:208px">10</div><div class="rl" style="left:241px">12</div><div class="rl" style="left:274px">14</div><div class="rl" style="left:307px">16</div><div class="rl" style="left:340px">18</div><div class="rl" style="left:373px">20</div><div class="rl" style="left:406px">22</div><div class="rl" style="left:439px">24</div><div class="rl" style="left:472px">26</div><div class="rl" style="left:505px">28</div><div class="rl" style="left:538px">30</div><div class="rl" style="left:572px">32</div><div class="rl" style="left:605px">34</div><div class="rl" style="left:638px">36</div><div class="rl" style="left:671px">38</div><div class="rl" style="left:704px">40</div><div class="rl" style="left:737px">42</div><div class="rl" style="left:770px">44</div><div class="rl" style="left:803px">46</div><div class="rl" style="left:836px">48</div><div class="rl" style="left:869px">50</div><div class="rl" style="left:902px">52</div><div class="rl" style="left:935px">54</div><div class="rl" style="left:969px">56</div><div class="rl" style="left:1002px">58</div><div class="rl" style="left:1035px">60</div><div class="rl" style="left:1068px">62</div><div class="rl" style="left:1101px">64</div><div class="rl" style="left:1134px">66</div><div class="rl" style="left:1167px">68</div><div class="rl" style="left:1200px">70</div><div class="rl" style="left:1233px">72</div><div class="rl" style="left:1266px">74</div><div class="rl" style="left:1299px">76</div><div class="rl" style="left:1332px">78</div><div class="rl" style="left:1366px">80</div><div class="rl" style="left:1399px">82</div><div class="rl" style="left:1432px">84</div><div class="rl" style="left:1465px">86</div><div class="rl" style="left:1498px">88</div><div class="rl" style="left:1531px">90</div>
<div class="f" style="left:1555px;top:846px;width:66px;height:17px">0 F</div>

<!-- transport row -->
<div class="g" style="left:40px;top:874px;width:5px;height:21px"></div>
<div class="f" style="left:48px;top:875px;width:66px;height:17px">0 F</div>
<div class="a" style="left:120px;top:875px;width:921px;height:17px;border-radius:3px;background:linear-gradient(#6e6e6e,#4c4c4c);color:#8a8a8a;font-size:11px;line-height:19px"><span style="position:absolute;left:17px">0 F</span><span style="position:absolute;right:17px">90 F</span></div>
<div class="f" style="left:1047px;top:875px;width:66px;height:17px">90 F</div>
<div class="b" style="left:1124px;top:871px;width:28px;height:26px"></div>
<div class="b" style="left:1162px;top:871px;width:139px;height:26px"></div>
<div class="b" style="left:1312px;top:871px;width:28px;height:26px"></div>
<div class="b" style="left:1350px;top:871px;width:83px;height:26px"></div>
<div class="b" style="left:1444px;top:871px;width:140px;height:26px"></div>
<div class="bl" style="left:1445px;top:872px;width:110px;height:24px"></div>
<div class="b" style="left:1595px;top:871px;width:27px;height:26px;background:#7d9fd0"></div>
<div class="dv" style="left:1189px;top:872px;height:24px"></div><div class="dv" style="left:1218px;top:872px;height:24px"></div><div class="dv" style="left:1245px;top:872px;height:24px"></div><div class="dv" style="left:1273px;top:872px;height:24px"></div><div class="dv" style="left:1378px;top:872px;height:24px"></div><div class="dv" style="left:1406px;top:872px;height:24px"></div><div class="dv" style="left:1471px;top:872px;height:24px;background:#4f6d99"></div><div class="dv" style="left:1500px;top:872px;height:24px;background:#4f6d99"></div><div class="dv" style="left:1527px;top:872px;height:24px;background:#4f6d99"></div><div class="dv" style="left:1555px;top:872px;height:24px;background:#4f6d99"></div>

<!-- material manager -->
<div class="a" style="left:40px;top:901px;width:1282px;height:1px;background:#5a5a5a"></div>
<div class="a" style="left:40px;top:922px;width:1282px;height:2px;background:#333"></div>
<div class="a" style="left:40px;top:1016px;width:1282px;height:1px;background:#333"></div>
<div class="a" style="left:40px;top:901px;width:1px;height:116px;background:#555"></div>
<div class="g" style="left:45px;top:906px;width:12px;height:12px"></div>
<div class="t" style="left:66px;top:906px">Create</div><div class="t" style="left:113px;top:906px">Edit</div><div class="t" style="left:147px;top:906px">Function</div><div class="t" style="left:207px;top:906px">Texture</div>
<div class="a" style="left:42px;top:926px;width:44px;height:57px;background:#777;border:1px solid #333;box-sizing:border-box"></div>
<div class="a" style="left:44px;top:927px;width:38px;height:40px;background:#161616;border-radius:50%"></div>
<div class="a" style="left:69px;top:932px;width:4px;height:4px;background:#6a1024;border-radius:50%"></div>
<div class="a" style="left:43px;top:970px;width:42px;height:12px;background:#555"></div>
<div class="t" style="left:43px;top:969px;color:#d8d8d8;font-size:10.5px;letter-spacing:.1px;overflow:hidden;width:42px">Utility_S</div>

<!-- MAXON -->
<div class="a" style="left:3px;top:1013px;transform-origin:0 0;transform:rotate(-90deg);white-space:nowrap;font-weight:bold;font-style:italic;font-size:16.5px;line-height:16px;color:#8c8c8c;letter-spacing:-.8px">MAXON</div>
<div class="a" style="left:19px;top:1012px;transform-origin:0 0;transform:rotate(-90deg);white-space:nowrap;font-size:15px;line-height:16px;color:#7c7c7c">CINEMA 4D</div>

<!-- coordinates -->
<div class="a" style="left:1325px;top:901px;width:296px;height:1px;background:#5a5a5a"></div>
<div class="a" style="left:1325px;top:922px;width:296px;height:2px;background:#333"></div>
<div class="a" style="left:1325px;top:1016px;width:296px;height:1px;background:#333"></div>
<div class="a" style="left:1323px;top:901px;width:1px;height:116px;background:#333"></div>
<div class="g" style="left:1330px;top:906px;width:12px;height:12px"></div>
<div class="t dim" style="left:1350px;top:906px;color:#777">--</div><div class="t dim" style="left:1442px;top:906px;color:#777">--</div><div class="t dim" style="left:1534px;top:906px;color:#777">--</div>
<div class="t dim" style="left:1329px;top:930px">X</div><div class="t dim" style="left:1329px;top:950px">Y</div><div class="t dim" style="left:1329px;top:970px">Z</div><div class="t dim" style="left:1426px;top:930px">X</div><div class="t dim" style="left:1426px;top:950px">Y</div><div class="t dim" style="left:1426px;top:970px">Z</div><div class="t dim" style="left:1524px;top:930px">H</div><div class="t dim" style="left:1524px;top:950px">P</div><div class="t dim" style="left:1524px;top:970px">B</div>
<div class="c" style="left:1339px;top:929px;width:84px">0 cm</div><div class="c" style="left:1339px;top:949px;width:84px">0 cm</div><div class="c" style="left:1339px;top:969px;width:84px">0 cm</div>
<div class="c" style="left:1436px;top:929px;width:84px">0 cm</div><div class="c" style="left:1436px;top:949px;width:84px">0 cm</div><div class="c" style="left:1436px;top:969px;width:84px">0 cm</div>
<div class="c" style="left:1535px;top:929px;width:81px">0 °</div><div class="c" style="left:1535px;top:949px;width:81px">0 °</div><div class="c" style="left:1535px;top:969px;width:81px">0 °</div>
<div class="a" style="left:1339px;top:991px;width:83px;height:16px;background:#575757;border-radius:2px;color:#7e7e7e;font-size:11px;line-height:18px;padding-left:7px;box-sizing:border-box">World</div>
<div class="a" style="left:1436px;top:991px;width:84px;height:16px;background:#575757;border-radius:2px;color:#7e7e7e;font-size:11px;line-height:18px;padding-left:7px;box-sizing:border-box">Scale</div>
<div class="a" style="left:1535px;top:991px;width:82px;height:16px;background:linear-gradient(#6e6e6e,#5a5a5a);border-radius:8px;color:#cfcfcf;font-size:11px;line-height:18px;text-align:center">Apply</div>

<!-- status -->
<div class="a" style="left:0;top:1020px;width:1622px;height:1px;background:#555"></div>
<div class="g" style="left:4px;top:1024px;width:12px;height:10px"></div>
<div class="t" style="left:26px;top:1024px;color:#b0b0b0;font-size:11.5px;letter-spacing:.12px">Move: Click and drag to move elements. Hold down SHIFT to quantize movement / add to the selection in point mode, CTRL to remove.</div>
<div class="a" style="left:1627px;top:1026px;width:269px;height:10px;background:#333;border-radius:5px 5px 0 0"></div>
<div class="a" style="left:1638px;top:1027px;width:180px;height:9px;background:#6e6e6e;border-radius:3px 3px 0 0"></div>

</body></html>
